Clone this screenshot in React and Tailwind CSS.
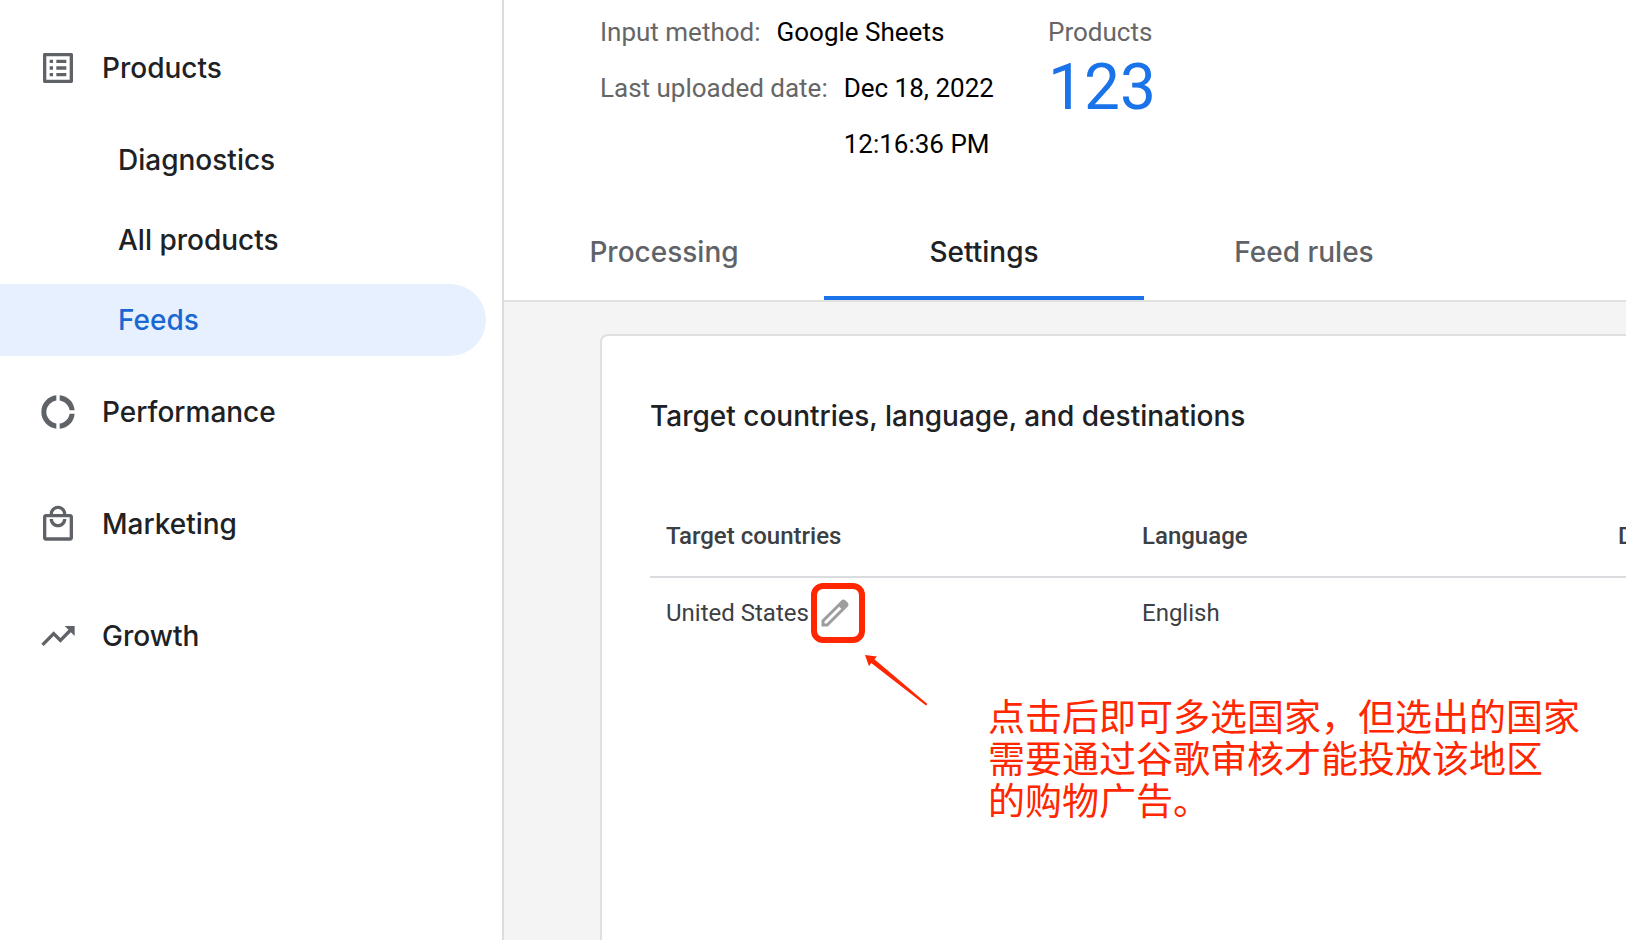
import React, { useState } from "react";
import clsx from "clsx";

const ICONS = {
  products:
    "M19 5v14H5V5h14m1.1-2H3.9c-.5 0-.9.4-.9.9v16.2c0 .4.4.9.9.9h16.2c.4 0 .9-.5.9-.9V3.9c0-.5-.5-.9-.9-.9zM11 7h6v2h-6V7zm0 4h6v2h-6v-2zm0 4h6v2h-6zM7 7h2v2H7zm0 4h2v2H7zm0 4h2v2H7z",
  performance:
    "M11 5.08V2c-5 .5-9 4.81-9 10s4 9.5 9 10v-3.08c-3-.48-6-3.4-6-6.92s3-6.44 6-6.92zM18.97 11H22c-.47-5-4-8.53-9-9v3.08C16 5.51 18.54 8 18.97 11zM13 18.92V22c5-.47 8.53-4 9-9h-3.03c-.43 3-2.97 5.49-5.97 5.92z",
  marketing:
    "M19.2 6h-2.2c0-2.76-2.24-5-5-5S7 3.24 7 6H4.8C3.8 6 3 6.8 3 7.8v12.4c0 1 .8 1.8 1.8 1.8h14.4c1 0 1.8-.8 1.8-1.8V7.8c0-1-.8-1.8-1.8-1.8zM12 3c1.66 0 3 1.34 3 3H9c0-1.66 1.34-3 3-3zm7 17H5V8h14v12zm-7-8c-1.66 0-3-1.34-3-3H7c0 2.76 2.24 5 5 5s5-2.24 5-5h-2c0 1.66-1.34 3-3 3z",
  growth:
    "M16 6l2.29 2.29-4.88 4.88-4-4L2 16.59 3.41 18l6-6 4 4 6.3-6.29L22 12V6z",
  edit: "M20.41 4.94l-1.35-1.35c-.78-.78-2.05-.78-2.83 0L3 16.82V21h4.18L20.41 7.77c.79-.78.79-2.05 0-2.83zM6.41 19.06L5 19v-1.36l9.82-9.82 1.41 1.41-9.82 9.83z",
};

const NAV = [
  {
    label: "Products",
    icon: "products",
    children: ["Diagnostics", "All products", "Feeds"],
  },
  { label: "Performance", icon: "performance" },
  { label: "Marketing", icon: "marketing" },
  { label: "Growth", icon: "growth" },
];

const TABS = ["Processing", "Settings", "Feed rules"];

const Icon = ({ name, className }) => (
  <svg
    viewBox="0 0 24 24"
    fill="currentColor"
    className={className}
    aria-hidden="true"
  >
    <path d={ICONS[name]} />
  </svg>
);

const Sidebar = ({ active }) => (
  <nav className="w-[504px] shrink-0 border-r-2 border-[#dadce0] pt-3 font-['Inter',sans-serif] text-[28px] leading-8 font-medium text-[#202124]">
    <ul>
      {NAV.map((item) => (
        <li key={item.label}>
          <a href="#" className="flex h-28 items-center gap-6 pl-[38px]">
            <Icon name={item.icon} className="size-10 text-[#5f6368]" />
            {item.label}
          </a>
          {item.children && (
            <ul className="flex flex-col gap-2 pr-4">
              {item.children.map((child) => (
                <li key={child}>
                  <a
                    href="#"
                    className={clsx(
                      "flex h-18 items-center rounded-r-full pl-[118px]",
                      child === active && "bg-[#e6f0ff] text-[#1967d2]"
                    )}
                  >
                    {child}
                  </a>
                </li>
              ))}
            </ul>
          )}
        </li>
      ))}
    </ul>
  </nav>
);

const FeedSummary = () => (
  <div className="flex pt-1 pl-24 text-[26px] leading-[56px]">
    <dl className="w-[448px]">
      <div className="flex gap-4">
        <dt className="text-[#666]">Input method:</dt>
        <dd className="text-black">Google Sheets</dd>
      </div>
      <div className="flex gap-4">
        <dt className="shrink-0 text-[#666]">Last uploaded date:</dt>
        <dd className="text-black">
          Dec 18, 2022
          <br />
          12:16:36 PM
        </dd>
      </div>
    </dl>
    <div>
      <div className="text-[#666]">Products</div>
      <a href="#" className="block text-[64px] leading-[56px] text-[#1a73e8]">
        123
      </a>
    </div>
  </div>
);

// Hand-drawn style callout pointing at the edit button
const Callout = () => (
  <div className="pointer-events-none absolute top-[318px] left-[262px] text-[#ff2600]">
    <svg viewBox="0 0 64 52" className="h-[52px] w-16" fill="currentColor">
      <path d="M1 1l12 1.4-2.6 2.8L63.4 50 62 51.5 7.2 9 5 12.2z" />
    </svg>
    <p className="-mt-3 ml-[124px] font-['Noto_Sans_CJK_SC',sans-serif] text-[37px] leading-[42px] whitespace-nowrap">
      点击后即可多选国家，但选出的国家
      <br />
      需要通过谷歌审核才能投放该地区
      <br />
      的购物广告。
    </p>
  </div>
);

const TargetCard = () => (
  <section className="relative flex-1 rounded-tl-lg border-t-2 border-l-2 border-[#e0e0e0] bg-white pt-16 pl-12">
    <h2 className="font-['Inter',sans-serif] text-[28px] leading-8 font-medium text-[#202124]">
      Target countries, language, and destinations
    </h2>
    <table className="mt-16 w-[1428px] table-fixed border-separate border-spacing-0 text-left text-2xl text-[#3c4043]">
      <thead>
        <tr>
          {["Target countries", "Language", "Destinations"].map((label) => (
            <th
              key={label}
              className="h-[82px] border-b-2 border-[#dadce0] px-4 py-0 font-medium"
            >
              {label}
            </th>
          ))}
        </tr>
      </thead>
      <tbody>
        <tr>
          <td className="h-[70px] px-4 py-0">
            <div className="flex items-center">
              United States
              <button
                type="button"
                aria-label="Edit target countries"
                className="relative ml-2 text-[#9e9e9e]"
              >
                <Icon name="edit" className="size-9" />
                <span className="absolute -inset-y-3 -right-3 -left-1.5 rounded-xl border-6 border-[#ff2600]" />
              </button>
            </div>
          </td>
          <td className="px-4 py-0">English</td>
          <td />
        </tr>
      </tbody>
    </table>
    <Callout />
  </section>
);

export default function App() {
  const [tab, setTab] = useState("Settings");

  return (
    <div className="flex min-h-screen overflow-hidden bg-white font-['Roboto',sans-serif]">
      <Sidebar active="Feeds" />
      <main className="flex min-w-0 flex-1 flex-col">
        <FeedSummary />
        <div
          role="tablist"
          className="mt-8 flex border-b-2 border-[#e0e0e0] font-['Inter',sans-serif] text-[28px] leading-8 font-medium"
        >
          {TABS.map((name) => (
            <button
              key={name}
              type="button"
              role="tab"
              aria-selected={tab === name}
              onClick={() => setTab(name)}
              className={clsx(
                "h-24 w-80 border-y-4 border-t-transparent",
                tab === name
                  ? "border-b-[#1a73e8] text-[#202124]"
                  : "border-b-transparent text-[#5f6368]"
              )}
            >
              {name}
            </button>
          ))}
        </div>
        <div className="flex flex-1 bg-[#f4f4f4] pt-8 pl-24">
          <TargetCard />
        </div>
      </main>
    </div>
  );
}
